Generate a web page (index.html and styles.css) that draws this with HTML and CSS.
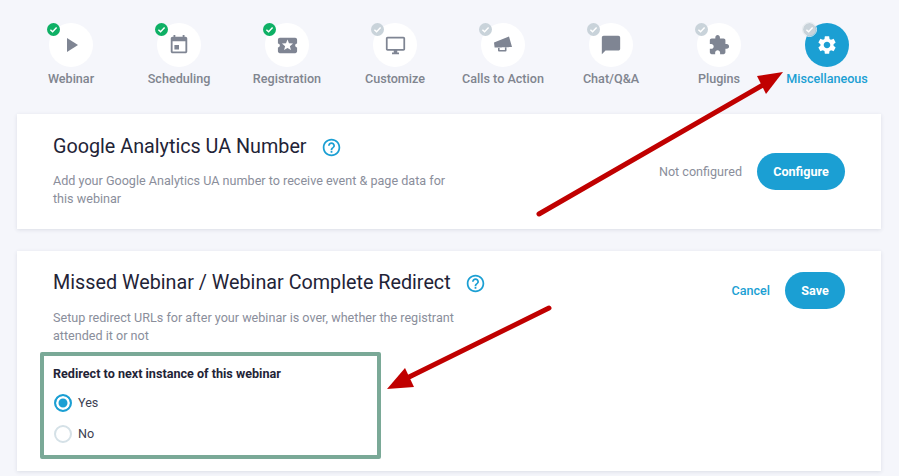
FILE: index.html
```html
<!DOCTYPE html>
<html lang="en">
  <head>
    <meta charset="UTF-8" />
    <title>Webinar settings</title>
    <link rel="stylesheet" href="styles.css">
  </head>
  <body>
    <div class="page">
      <nav class="steps">
        <a class="step">
          <span class="step_circle">
            <svg class="badge done" viewBox="0 0 13 13"><path d="M3.4 6.7l2.2 2.1 4-4.2" /></svg>
            <svg class="icon" width="24" height="24" viewBox="0 0 24 24"><path d="M8 5v14l11-7z" /></svg>
          </span>
          <span class="step_label">Webinar</span>
        </a>
        <a class="step">
          <span class="step_circle">
            <svg class="badge done" viewBox="0 0 13 13"><path d="M3.4 6.7l2.2 2.1 4-4.2" /></svg>
            <svg class="icon" width="22" height="22" viewBox="0 0 24 24"><path d="M12 12H7v5h5v-5zM16 1v2H8V1H6v2H5c-1.11 0-1.99.9-1.99 2L3 19c0 1.1.89 2 2 2h14c1.1 0 2-.9 2-2V5c0-1.1-.9-2-2-2h-1V1h-2zm3 18H5V8h14v11z" /></svg>
          </span>
          <span class="step_label">Scheduling</span>
        </a>
        <a class="step">
          <span class="step_circle">
            <svg class="badge done" viewBox="0 0 13 13"><path d="M3.4 6.7l2.2 2.1 4-4.2" /></svg>
            <svg class="icon" width="23" height="23" viewBox="0 0 24 24"><path d="M20 12c0-1.1.9-2 2-2V6c0-1.1-.9-2-2-2H4c-1.1 0-1.99.9-1.99 2v4c1.1 0 1.99.9 1.99 2s-.89 2-2 2v4c0 1.1.9 2 2 2h16c1.1 0 2-.9 2-2v-4c-1.1 0-2-.9-2-2zm-4.42 4.8L12 14.5l-3.58 2.3 1.08-4.12-3.29-2.69 4.24-.25L12 5.8l1.54 3.95 4.24.25-3.29 2.69 1.09 4.11z" /></svg>
          </span>
          <span class="step_label">Registration</span>
        </a>
        <a class="step">
          <span class="step_circle">
            <svg class="badge" viewBox="0 0 13 13"><path d="M3.4 6.7l2.2 2.1 4-4.2" /></svg>
            <svg class="icon" width="21" height="21" viewBox="0 0 24 24"><path d="M21 2H3c-1.1 0-2 .9-2 2v12c0 1.1.9 2 2 2h7v2H8v2h8v-2h-2v-2h7c1.1 0 2-.9 2-2V4c0-1.1-.9-2-2-2zm0 14H3V4h18v12z" /></svg>
          </span>
          <span class="step_label">Customize</span>
        </a>
        <a class="step">
          <span class="step_circle">
            <svg class="badge" viewBox="0 0 13 13"><path d="M3.4 6.7l2.2 2.1 4-4.2" /></svg>
            <svg class="icon" width="22" height="22" viewBox="0 0 22 22"><path d="M2 8.5L17 2.5L20 13L2.6 13.5zM6 13v3.5a1 1 0 0 0 1 1h6.5a1 1 0 0 0 1-1V13h-1.6v2.9H7.6V13z" /></svg>
          </span>
          <span class="step_label">Calls to Action</span>
        </a>
        <a class="step">
          <span class="step_circle">
            <svg class="badge" viewBox="0 0 13 13"><path d="M3.4 6.7l2.2 2.1 4-4.2" /></svg>
            <svg class="icon" width="22" height="22" viewBox="0 0 24 24"><path d="M20 2H4c-1.1 0-1.99.9-1.99 2L2 22l4-4h14c1.1 0 2-.9 2-2V4c0-1.1-.9-2-2-2z" /></svg>
          </span>
          <span class="step_label">Chat/Q&amp;A</span>
        </a>
        <a class="step">
          <span class="step_circle">
            <svg class="badge" viewBox="0 0 13 13"><path d="M3.4 6.7l2.2 2.1 4-4.2" /></svg>
            <svg class="icon" width="22" height="22" viewBox="0 0 24 24"><path d="M20.5 11H19V7c0-1.1-.9-2-2-2h-4V3.5C13 2.12 11.88 1 10.5 1S8 2.12 8 3.5V5H4c-1.1 0-1.99.9-1.99 2v3.8H3.5c1.49 0 2.7 1.21 2.7 2.7s-1.21 2.7-2.7 2.7H2V20c0 1.1.9 2 2 2h3.8v-1.5c0-1.49 1.21-2.7 2.7-2.7 1.49 0 2.7 1.21 2.7 2.7V22H17c1.1 0 2-.9 2-2v-4h1.5c1.38 0 2.5-1.12 2.5-2.5S21.88 11 20.5 11z" /></svg>
          </span>
          <span class="step_label">Plugins</span>
        </a>
        <a class="step active">
          <span class="step_circle">
            <svg class="badge" viewBox="0 0 13 13"><path d="M3.4 6.7l2.2 2.1 4-4.2" /></svg>
            <svg class="icon" width="22" height="22" viewBox="0 0 24 24"><path d="M19.14 12.94c.04-.3.06-.61.06-.94 0-.32-.02-.64-.07-.94l2.03-1.58c.18-.14.23-.41.12-.61l-1.92-3.32c-.12-.22-.37-.29-.59-.22l-2.39.96c-.5-.38-1.03-.7-1.62-.94l-.36-2.54c-.04-.24-.24-.41-.48-.41h-3.84c-.24 0-.43.17-.47.41l-.36 2.54c-.59.24-1.13.57-1.62.94l-2.39-.96c-.22-.08-.47 0-.59.22L2.74 8.87c-.12.21-.08.47.12.61l2.03 1.58c-.05.3-.09.63-.09.94s.02.64.07.94l-2.03 1.58c-.18.14-.23.41-.12.61l1.92 3.32c.12.22.37.29.59.22l2.39-.96c.5.38 1.03.7 1.62.94l.36 2.54c.05.24.24.41.48.41h3.84c.24 0 .44-.17.47-.41l.36-2.54c.59-.24 1.13-.56 1.62-.94l2.39.96c.22.08.47 0 .59-.22l1.92-3.32c.12-.22.07-.47-.12-.61l-2.01-1.58zM12 15.6c-1.98 0-3.6-1.62-3.6-3.6s1.62-3.6 3.6-3.6 3.6 1.62 3.6 3.6-1.62 3.6-3.6 3.6z" /></svg>
          </span>
          <span class="step_label">Miscellaneous</span>
        </a>
      </nav>

      <section class="card card_ga">
        <div class="card_text">
          <h2 class="card_title">
            Google Analytics UA Number
            <svg class="help" width="21" height="21" viewBox="0 0 24 24"><path d="M11 18h2v-2h-2v2zm1-16C6.48 2 2 6.48 2 12s4.48 10 10 10 10-4.48 10-10S17.52 2 12 2zm0 18c-4.41 0-8-3.59-8-8s3.59-8 8-8 8 3.59 8 8-3.59 8-8 8zm0-14c-2.21 0-4 1.79-4 4h2c0-1.1.9-2 2-2s2 .9 2 2c0 2-3 1.75-3 5h2c0-2.25 3-2.5 3-5 0-2.21-1.79-4-4-4z" /></svg>
          </h2>
          <p class="card_desc">Add your Google Analytics UA number to receive event &amp; page data for this webinar</p>
        </div>
        <div class="card_actions">
          <span class="status">Not configured</span>
          <button class="btn btn_configure">Configure</button>
        </div>
      </section>

      <section class="card card_redirect">
        <div class="card_main">
          <div class="card_text">
            <h2 class="card_title">
              Missed Webinar / Webinar Complete Redirect
              <svg class="help" width="21" height="21" viewBox="0 0 24 24"><path d="M11 18h2v-2h-2v2zm1-16C6.48 2 2 6.48 2 12s4.48 10 10 10 10-4.48 10-10S17.52 2 12 2zm0 18c-4.41 0-8-3.59-8-8s3.59-8 8-8 8 3.59 8 8-3.59 8-8 8zm0-14c-2.21 0-4 1.79-4 4h2c0-1.1.9-2 2-2s2 .9 2 2c0 2-3 1.75-3 5h2c0-2.25 3-2.5 3-5 0-2.21-1.79-4-4-4z" /></svg>
            </h2>
            <p class="card_desc">Setup redirect URLs for after your webinar is over, whether the registrant attended it or not</p>
          </div>
          <div class="card_actions card_actions_top">
            <a class="cancel">Cancel</a>
            <button class="btn btn_save">Save</button>
          </div>
        </div>
        <div class="redirect_box">
          <p class="redirect_title">Redirect to next instance of this webinar</p>
          <label class="radio_row"><span class="radio checked"></span>Yes</label>
          <label class="radio_row"><span class="radio"></span>No</label>
        </div>
      </section>

      <svg class="arrows" width="899" height="476" viewBox="0 0 899 476">
        <path class="arrow_line" d="M539 214L768 82" />
        <path class="arrow_head" d="M783 72L757 76L766 94z" />
        <path class="arrow_line" d="M549 308L405 379" />
        <path class="arrow_head" d="M387 389L405 368L414 387z" />
      </svg>
    </div>
  </body>
</html>
```

FILE: styles.css
```css
* {
  box-sizing: border-box;
  padding: 0;
  margin: 0;
}
body {
  font-family: Roboto, "Liberation Sans", sans-serif;
  background-color: #f5f6fb;
  color: #1f2437;
  overflow: hidden;
}
.page {
  position: relative;
  width: 899px;
  height: 476px;
  padding: 23px 18px 0 17px;
}

/* steps */
.steps {
  display: flex;
}
.step {
  width: 108px;
  display: flex;
  flex-direction: column;
  align-items: center;
  color: #80858f;
  font-size: 12.6px;
  font-weight: 500;
}
.step_circle {
  position: relative;
  width: 44px;
  height: 44px;
  border-radius: 50%;
  background-color: #fff;
  display: flex;
  align-items: center;
  justify-content: center;
}
.step_circle .icon {
  fill: #7f8593;
}
.step_label {
  margin-top: 4px;
  line-height: 15px;
  white-space: nowrap;
}
.badge {
  position: absolute;
  left: -2px;
  top: 0;
  width: 13px;
  height: 13px;
  border-radius: 50%;
  background-color: #c9d3da;
  fill: none;
  stroke: #fff;
  stroke-width: 1.4;
}
.badge.done {
  background-color: #0eb065;
}
.step.active {
  color: #1b9fd3;
}
.step.active .step_circle {
  background-color: #1b9fd3;
}
.step.active .icon {
  fill: #fff;
}
.step.active .badge {
  outline: 1px solid #e6ebee;
}

/* cards */
.card {
  background-color: #fff;
  box-shadow: 0 1px 4px rgba(40, 50, 80, 0.12);
  padding: 0 36px;
}
.card_ga {
  margin-top: 28px;
  height: 115px;
  display: flex;
  justify-content: space-between;
  align-items: flex-start;
  padding-top: 20px;
}
.card_redirect {
  margin-top: 22px;
  height: 220px;
  padding-top: 20px;
}
.card_main {
  display: flex;
  justify-content: space-between;
  align-items: flex-start;
}
.card_text {
  width: 405px;
}
.card_title {
  font-size: 19.75px;
  font-weight: 400;
  line-height: 24px;
  white-space: nowrap;
  display: flex;
  align-items: center;
}
.card_ga .card_title {
  margin-top: 1px;
}
.help {
  fill: #1b9fd3;
  flex-shrink: 0;
  margin-left: 14px;
}
.card_desc {
  font-size: 12.6px;
  line-height: 18px;
  color: #8a8e9b;
  margin-top: 14px;
}
.card_ga .card_desc {
  margin-top: 13px;
}
.card_actions {
  display: flex;
  align-items: center;
  margin-top: 19px;
}
.card_actions_top {
  margin-top: 1px;
}
.status {
  font-size: 12.6px;
  color: #8a8e9b;
  margin-right: 15px;
}
.cancel {
  font-size: 12.6px;
  font-weight: 500;
  color: #1b9fd3;
  margin-right: 15px;
}
.btn {
  height: 37px;
  border: none;
  border-radius: 19px;
  background-color: #1b9fd3;
  color: #fff;
  font-family: inherit;
  font-size: 12.6px;
  font-weight: 700;
}
.btn_configure {
  width: 88px;
}
.btn_save {
  width: 60px;
}

/* redirect box */
.redirect_box {
  width: 341px;
  height: 107px;
  margin: 7px 0 0 -13px;
  border: 4px solid #7aa997;
  border-radius: 2px;
  padding: 10px 9px;
}
.redirect_title {
  font-size: 12.6px;
  font-weight: 700;
  line-height: 16px;
  margin-bottom: 5px;
}
.radio_row {
  display: flex;
  align-items: center;
  height: 31px;
  font-size: 12.6px;
  color: #3c4152;
}
.radio {
  width: 18px;
  height: 18px;
  margin: 0 6px 0 1px;
  border: 2px solid #d5e1e7;
  border-radius: 50%;
}
.radio.checked {
  border-color: #1b9fd3;
  background-color: #1b9fd3;
  box-shadow: inset 0 0 0 2.5px #fff;
}

/* annotation arrows */
.arrows {
  position: absolute;
  left: 0;
  top: 0;
  pointer-events: none;
}
.arrow_line {
  stroke: #c00000;
  stroke-width: 5;
  stroke-linecap: round;
  fill: none;
}
.arrow_head {
  fill: #c00000;
}
```
